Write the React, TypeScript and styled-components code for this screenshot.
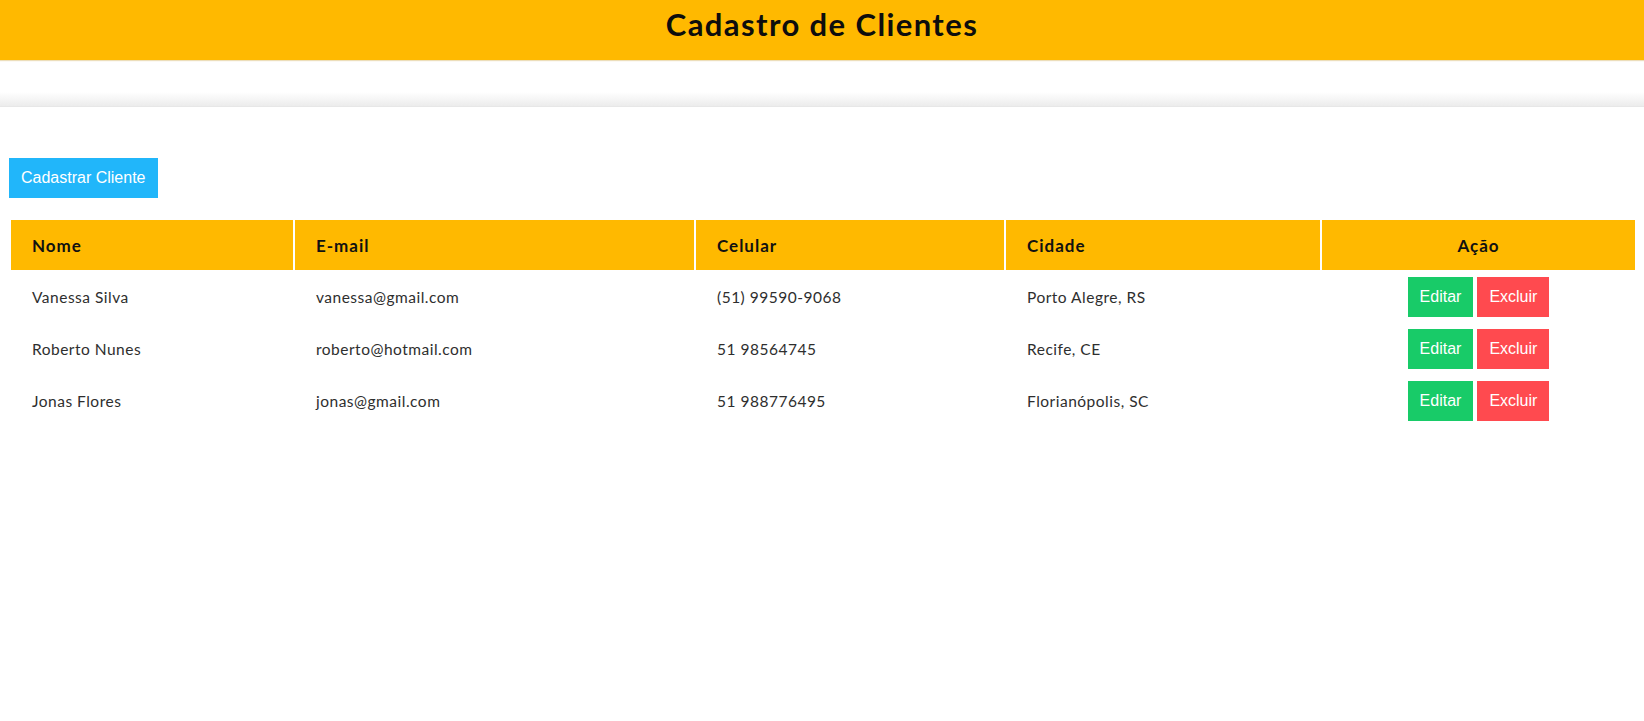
import React from "react";
import styled, { createGlobalStyle } from "styled-components";

const GlobalStyle = createGlobalStyle`
  html, body { margin: 0; padding: 0; background: #fff; }
  body { font-family: "Lato", "Open Sans", sans-serif; color: #222; }
`;

const TopBar = styled.header`
  height: 107px;
  display: flex;
  flex-direction: column;
  background: linear-gradient(to bottom, #fff 0, #fff 92px, #ececec 106px, #e2e2e2 107px);
`;

const TitleBar = styled.div`
  height: 60px;
  background: #ffb900;
  display: flex;
  align-items: center;
  justify-content: center;
  box-shadow: 0 1px 1px rgba(200, 160, 60, 0.35);
`;

const Title = styled.h1`
  margin: 0;
  font-family: "Lato", sans-serif;
  font-weight: 700;
  font-size: 31px;
  letter-spacing: 1.4px;
  color: #0d0d0d;
  padding-bottom: 12px;
`;

const Main = styled.main`
  padding: 51px 7px 0 9px;
  display: flex;
  flex-direction: column;
  align-items: flex-start;
`;

const PrimaryButton = styled.button`
  height: 40px;
  padding: 0 12px;
  border: none;
  border-radius: 0;
  background: #21b6fa;
  color: #fff;
  font-family: "Liberation Sans", Arial, sans-serif;
  font-size: 16px;
  cursor: pointer;
`;

const Table = styled.table`
  margin-top: 20px;
  width: 100%;
  border-collapse: separate;
  border-spacing: 2px;
`;

const Th = styled.th<{ $w: number; $center?: boolean }>`
  box-sizing: border-box;
  width: ${(p) => p.$w}px;
  height: 50px;
  padding: ${(p) => (p.$center ? "0" : "0 0 0 21px")};
  background: #ffb900;
  color: #111;
  font-family: "Lato", sans-serif;
  font-weight: 700;
  font-size: 17px;
  letter-spacing: 1px;
  text-align: ${(p) => (p.$center ? "center" : "left")};
`;

const Td = styled.td<{ $center?: boolean }>`
  height: 40px;
  padding: ${(p) => (p.$center ? "5px 0" : "5px 0 5px 21px")};
  font-family: "Lato", sans-serif;
  font-size: 15.5px;
  letter-spacing: 0.5px;
  color: #2e2e2e;
  text-align: ${(p) => (p.$center ? "center" : "left")};
`;

const Actions = styled.div`
  display: flex;
  justify-content: center;
  gap: 4px;
`;

const ActionButton = styled.button<{ $kind: "edit" | "delete" }>`
  height: 40px;
  padding: 0 12px;
  border: none;
  border-radius: 0;
  background: ${(p) => (p.$kind === "edit" ? "#18cb68" : "#ff4a4f")};
  color: #fff;
  font-family: "Liberation Sans", Arial, sans-serif;
  font-size: 16px;
  letter-spacing: 0;
  cursor: pointer;
`;

const clients = [
  { nome: "Vanessa Silva", email: "vanessa@gmail.com", celular: "(51) 99590-9068", cidade: "Porto Alegre, RS" },
  { nome: "Roberto Nunes", email: "roberto@hotmail.com", celular: "51 98564745", cidade: "Recife, CE" },
  { nome: "Jonas Flores", email: "jonas@gmail.com", celular: "51 988776495", cidade: "Florianópolis, SC" },
];

export default function App() {
  return (
    <>
      <GlobalStyle />
      <TopBar>
        <TitleBar>
          <Title>Cadastro de Clientes</Title>
        </TitleBar>
      </TopBar>
      <Main>
        <PrimaryButton>Cadastrar Cliente</PrimaryButton>
        <Table>
          <thead>
            <tr>
              <Th $w={282}>Nome</Th>
              <Th $w={399}>E-mail</Th>
              <Th $w={308}>Celular</Th>
              <Th $w={314}>Cidade</Th>
              <Th $w={313} $center>Ação</Th>
            </tr>
          </thead>
          <tbody>
            {clients.map((c) => (
              <tr key={c.email}>
                <Td>{c.nome}</Td>
                <Td>{c.email}</Td>
                <Td>{c.celular}</Td>
                <Td>{c.cidade}</Td>
                <Td $center>
                  <Actions>
                    <ActionButton $kind="edit">Editar</ActionButton>
                    <ActionButton $kind="delete">Excluir</ActionButton>
                  </Actions>
                </Td>
              </tr>
            ))}
          </tbody>
        </Table>
      </Main>
    </>
  );
}
